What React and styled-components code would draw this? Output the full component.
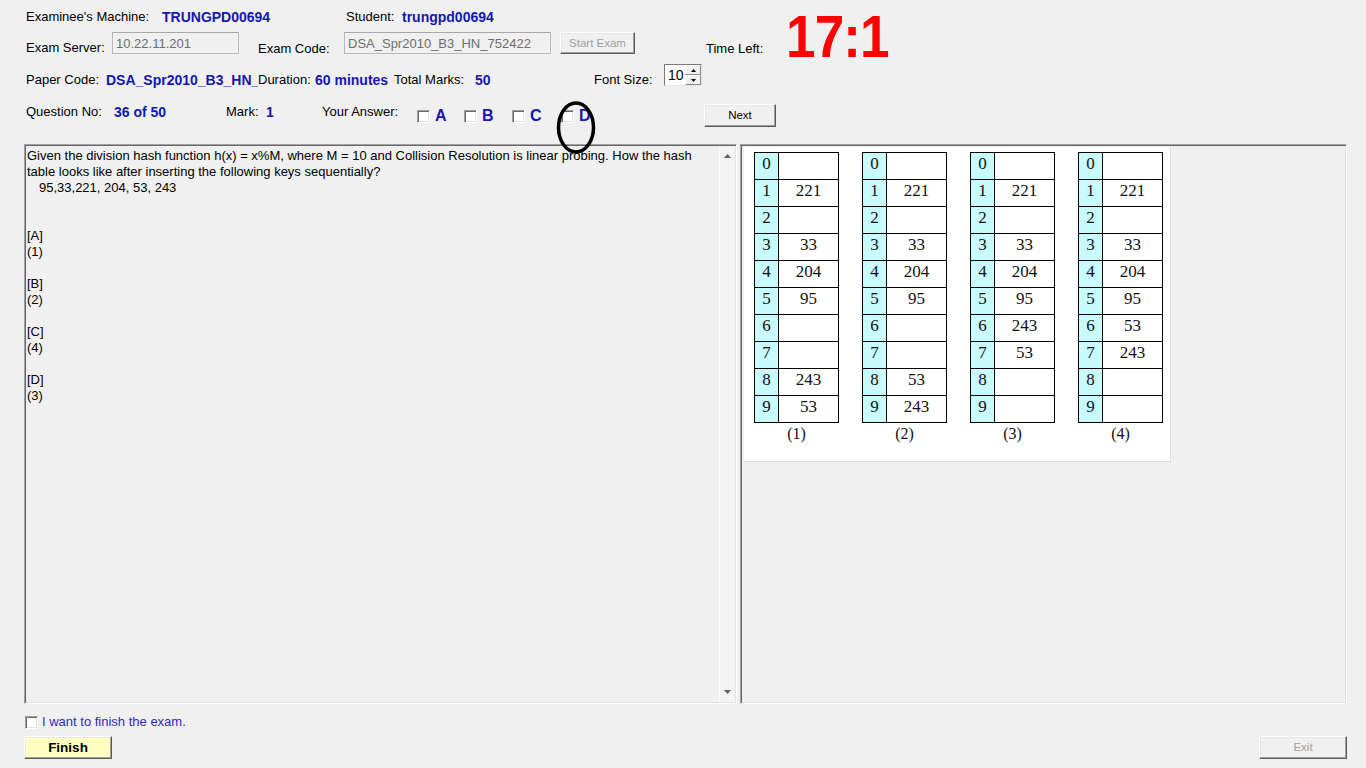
import React from "react";
import styled, { createGlobalStyle } from "styled-components";

const GlobalStyle = createGlobalStyle`
  html, body {
    margin: 0;
    padding: 0;
    background: #f0f0f0;
  }
  body {
    font-family: "Liberation Sans", Arial, sans-serif;
    font-size: 13px;
    color: #000;
  }
  #root {
    width: 1366px;
    height: 768px;
    overflow: hidden;
  }
`;

const Page = styled.div`
  box-sizing: border-box;
  width: 1366px;
  height: 768px;
  padding: 9px 19px 0 24px;
  display: flex;
  flex-direction: column;
`;

const Row = styled.div`
  display: flex;
  align-items: flex-start;
  height: ${(p) => p.$h}px;
  margin-top: ${(p) => p.$mt || 0}px;
  padding-left: 2px;
  white-space: nowrap;
`;

const Label = styled.div`
  flex-shrink: 0;
  width: ${(p) => (p.$w ? `${p.$w}px` : "auto")};
  margin-top: ${(p) => p.$dy || 0}px;
  margin-left: ${(p) => p.$ml || 0}px;
  font-size: 13px;
  line-height: 16px;
`;

const Value = styled(Label)`
  overflow: hidden;
  font-size: 14px;
  font-weight: bold;
  color: #1616b0;
`;

const TextBox = styled.input`
  box-sizing: border-box;
  flex-shrink: 0;
  width: ${(p) => p.$w}px;
  height: 22px;
  margin: 0 0 0 ${(p) => p.$ml || 0}px;
  padding: 1px 3px 0;
  border: 1px solid #b9b9b9;
  border-top-color: #a8a8a8;
  background: #f0f0f0;
  color: #6d6d6d;
  font-family: "Liberation Sans", Arial, sans-serif;
  font-size: 13px;
  line-height: 16px;
  outline: none;
`;

const WinButton = styled.button`
  box-sizing: border-box;
  flex-shrink: 0;
  width: ${(p) => p.$w}px;
  height: ${(p) => p.$h || 22}px;
  margin: ${(p) => p.$mt || 0}px 0 0 ${(p) => p.$ml || 0}px;
  padding: 0 0 1px;
  background: ${(p) => p.$bg || "#f0f0f0"};
  border: 1px solid;
  border-color: #fff #5a5a5a #5a5a5a #fff;
  box-shadow: inset -1px -1px #a0a0a0, inset 1px 1px #e8e8e8;
  color: ${(p) => (p.disabled ? "#a0a0a0" : "#000")};
  font-family: "Liberation Sans", Arial, sans-serif;
  font-size: ${(p) => (p.$bold ? "13.5px" : "11.5px")};
  font-weight: ${(p) => (p.$bold ? "bold" : "normal")};
`;

const Timer = styled.div`
  flex-shrink: 0;
  margin: -25px 0 0 2px;
  color: #ff0000;
  font-size: 59px;
  font-weight: bold;
  line-height: 60px;
  letter-spacing: -1px;
  transform: scaleX(0.9);
  transform-origin: left top;
`;

const Spinner = styled.div`
  box-sizing: border-box;
  display: flex;
  width: 38px;
  height: 22px;
  border: 1px solid;
  border-color: #7a7a7a #e3e3e3 #e3e3e3 #7a7a7a;
  background: #fff;
`;

const SpinValue = styled.div`
  flex: 1;
  padding: 1px 0 0 3px;
  font-size: 14px;
  line-height: 18px;
`;

const SpinButtons = styled.div`
  display: flex;
  flex-direction: column;
  width: 16px;
`;

const SpinButton = styled.div`
  flex: 1;
  display: flex;
  align-items: center;
  justify-content: center;
  background: #f0f0f0;
  border: 1px solid;
  border-color: #fff #8a8a8a #8a8a8a #fff;
`;

const CheckBox = styled.span`
  box-sizing: border-box;
  flex-shrink: 0;
  width: 13px;
  height: 13px;
  margin-top: ${(p) => p.$dy || 0}px;
  background: #fff;
  border: 1px solid;
  border-color: #a0a0a0 #fff #fff #a0a0a0;
  box-shadow: inset 1px 1px #696969, inset -1px -1px #e3e3e3;
`;

const Option = styled.div`
  position: relative;
  flex-shrink: 0;
  display: flex;
  align-items: flex-start;
  width: ${(p) => p.$w}px;
`;

const OptionLetter = styled.span`
  margin: 3px 0 0 5px;
  color: #1616b0;
  font-size: 16px;
  font-weight: bold;
  line-height: 18px;
`;

const Mark = styled.svg`
  position: absolute;
  left: -5px;
  top: -3px;
`;

const Panels = styled.div`
  display: flex;
  gap: 3px;
  height: 560px;
  margin-top: 17px;
`;

const Panel = styled.div`
  box-sizing: border-box;
  display: flex;
  width: ${(p) => (p.$w ? `${p.$w}px` : "auto")};
  flex: ${(p) => (p.$w ? "0 0 auto" : "1")};
  align-items: flex-start;
  padding: ${(p) => p.$pad || "1px"};
  border: 1px solid;
  border-color: #a0a0a0 #fff #fff #a0a0a0;
  box-shadow: inset 1px 1px #696969, inset -1px -1px #e3e3e3;
`;

const QuestionText = styled.div`
  flex: 1;
  padding: 2px 0 0 1px;
  font-size: 13px;
  line-height: 16px;
  white-space: pre;
`;

const Line = styled.div`
  height: 16px;
  padding-left: ${(p) => p.$indent || 0}px;
`;

const ScrollBar = styled.div`
  align-self: stretch;
  display: flex;
  flex-direction: column;
  justify-content: space-between;
  align-items: center;
  width: 15px;
  padding: 8px 0 8px;
  border-left: 1px solid #fbfbfb;
  background: #f3f3f3;
`;

const Picture = styled.div`
  box-sizing: border-box;
  display: flex;
  gap: 23px;
  width: 427px;
  height: 315px;
  padding: 5px 0 0 10px;
  background: #fff;
  border-right: 1px solid #dcdcdc;
  border-bottom: 1px solid #dcdcdc;
  font-family: "Liberation Serif", "Times New Roman", serif;
`;

const TableCol = styled.div`
  display: flex;
  flex-direction: column;
`;

const HashTable = styled.div`
  box-sizing: border-box;
  display: grid;
  grid-template-columns: 24px 60px;
  width: 85px;
  border-top: 1px solid #000;
  border-left: 1px solid #000;
`;

const Cell = styled.div`
  box-sizing: border-box;
  display: flex;
  align-items: center;
  justify-content: center;
  height: 27px;
  padding-bottom: 4px;
  border-right: 1px solid #000;
  border-bottom: 1px solid #000;
  background: ${(p) => (p.$index ? "#c8fbfb" : "#fff")};
  color: #111;
  font-size: 17px;
`;

const Caption = styled.div`
  margin-top: 2px;
  text-align: center;
  font-size: 16px;
  line-height: 18px;
  color: #111;
`;

const FinishRow = styled.div`
  display: flex;
  align-items: flex-start;
  gap: 4px;
  height: 16px;
  margin-top: 10px;
  padding-left: 1px;
`;

const FinishText = styled.span`
  color: #2b2bc0;
  font-size: 13px;
  line-height: 16px;
`;

const ButtonRow = styled.div`
  display: flex;
  justify-content: space-between;
  margin-top: 6px;
`;

const tables = [
  ["", "221", "", "33", "204", "95", "", "", "243", "53"],
  ["", "221", "", "33", "204", "95", "", "", "53", "243"],
  ["", "221", "", "33", "204", "95", "243", "53", "", ""],
  ["", "221", "", "33", "204", "95", "53", "243", "", ""],
];

const questionLines = [
  { text: "Given the division hash function h(x) = x%M, where M = 10 and Collision Resolution is linear probing. How the hash" },
  { text: "table looks like after inserting the following keys sequentially?" },
  { text: "95,33,221, 204, 53, 243", indent: 12 },
  { text: "" },
  { text: "" },
  { text: "[A]" },
  { text: "(1)" },
  { text: "" },
  { text: "[B]" },
  { text: "(2)" },
  { text: "" },
  { text: "[C]" },
  { text: "(4)" },
  { text: "" },
  { text: "[D]" },
  { text: "(3)" },
];

const Arrow = ({ down }) => (
  <svg width="7" height="4" viewBox="0 0 7 4">
    <polygon points={down ? "0,0 7,0 3.5,4" : "3.5,0 7,4 0,4"} fill="#606060" />
  </svg>
);

const App = () => {
  return (
    <>
      <GlobalStyle />
      <Page>
        <Row $h={16}>
          <Label $w={136}>Examinee's Machine:</Label>
          <Value $w={184}>TRUNGPD00694</Value>
          <Label $w={56}>Student:</Label>
          <Value>trungpd00694</Value>
        </Row>

        <Row $h={22} $mt={7}>
          <Label $w={86} $dy={8}>Exam Server:</Label>
          <TextBox $w={127} readOnly value="10.22.11.201" />
          <Label $w={86} $dy={9} $ml={19}>Exam Code:</Label>
          <TextBox $w={207} readOnly value="DSA_Spr2010_B3_HN_752422" />
          <WinButton $w={75} $ml={9} disabled>Start Exam</WinButton>
          <Label $w={78} $dy={9} $ml={71}>Time Left:</Label>
          <Timer>17:1</Timer>
        </Row>

        <Row $h={22} $mt={10}>
          <Label $w={80} $dy={8}>Paper Code:</Label>
          <Value $w={152} $dy={8}>DSA_Spr2010_B3_HN_</Value>
          <Label $w={57} $dy={8}>Duration:</Label>
          <Value $w={79} $dy={8}>60 minutes</Value>
          <Label $w={81} $dy={8}>Total Marks:</Label>
          <Value $w={119} $dy={8}>50</Value>
          <Label $w={70} $dy={8}>Font Size:</Label>
          <Spinner>
            <SpinValue>10</SpinValue>
            <SpinButtons>
              <SpinButton>
                <svg width="5" height="3" viewBox="0 0 5 3">
                  <polygon points="2.5,0 5,3 0,3" fill="#000" />
                </svg>
              </SpinButton>
              <SpinButton>
                <svg width="5" height="3" viewBox="0 0 5 3">
                  <polygon points="0,0 5,0 2.5,3" fill="#000" />
                </svg>
              </SpinButton>
            </SpinButtons>
          </Spinner>
        </Row>

        <Row $h={23} $mt={18}>
          <Label $w={88}>Question No:</Label>
          <Value $w={112}>36 of 50</Value>
          <Label $w={40}>Mark:</Label>
          <Value $w={56}>1</Value>
          <Label $w={95}>Your Answer:</Label>
          <Option $w={47}>
            <CheckBox $dy={6} />
            <OptionLetter>A</OptionLetter>
          </Option>
          <Option $w={48}>
            <CheckBox $dy={6} />
            <OptionLetter>B</OptionLetter>
          </Option>
          <Option $w={49}>
            <CheckBox $dy={6} />
            <OptionLetter>C</OptionLetter>
          </Option>
          <Option $w={143}>
            <CheckBox $dy={6} />
            <OptionLetter>D</OptionLetter>
            <Mark width="42" height="56" viewBox="0 0 42 56">
              <ellipse cx="20" cy="26.5" rx="17.5" ry="24.5" fill="none" stroke="#000" strokeWidth="3.5" />
            </Mark>
          </Option>
          <WinButton $w={72} $h={23}>Next</WinButton>
        </Row>

        <Panels>
          <Panel $w={713}>
            <QuestionText>
              {questionLines.map((l, i) => (
                <Line key={i} $indent={l.indent}>{l.text}</Line>
              ))}
            </QuestionText>
            <ScrollBar>
              <Arrow />
              <Arrow down />
            </ScrollBar>
          </Panel>
          <Panel $pad="2px 0 0 3px">
            <Picture>
              {tables.map((vals, t) => (
                <TableCol key={t}>
                  <HashTable>
                    {vals.map((v, i) => (
                      <React.Fragment key={i}>
                        <Cell $index>{i}</Cell>
                        <Cell>{v}</Cell>
                      </React.Fragment>
                    ))}
                  </HashTable>
                  <Caption>({t + 1})</Caption>
                </TableCol>
              ))}
            </Picture>
          </Panel>
        </Panels>

        <FinishRow>
          <CheckBox $dy={2} />
          <FinishText>I want to finish the exam.</FinishText>
        </FinishRow>

        <ButtonRow>
          <WinButton $w={88} $h={23} $bg="#ffffc0" $bold>Finish</WinButton>
          <WinButton $w={88} $h={23} disabled>Exit</WinButton>
        </ButtonRow>
      </Page>
    </>
  );
};

export default App;
